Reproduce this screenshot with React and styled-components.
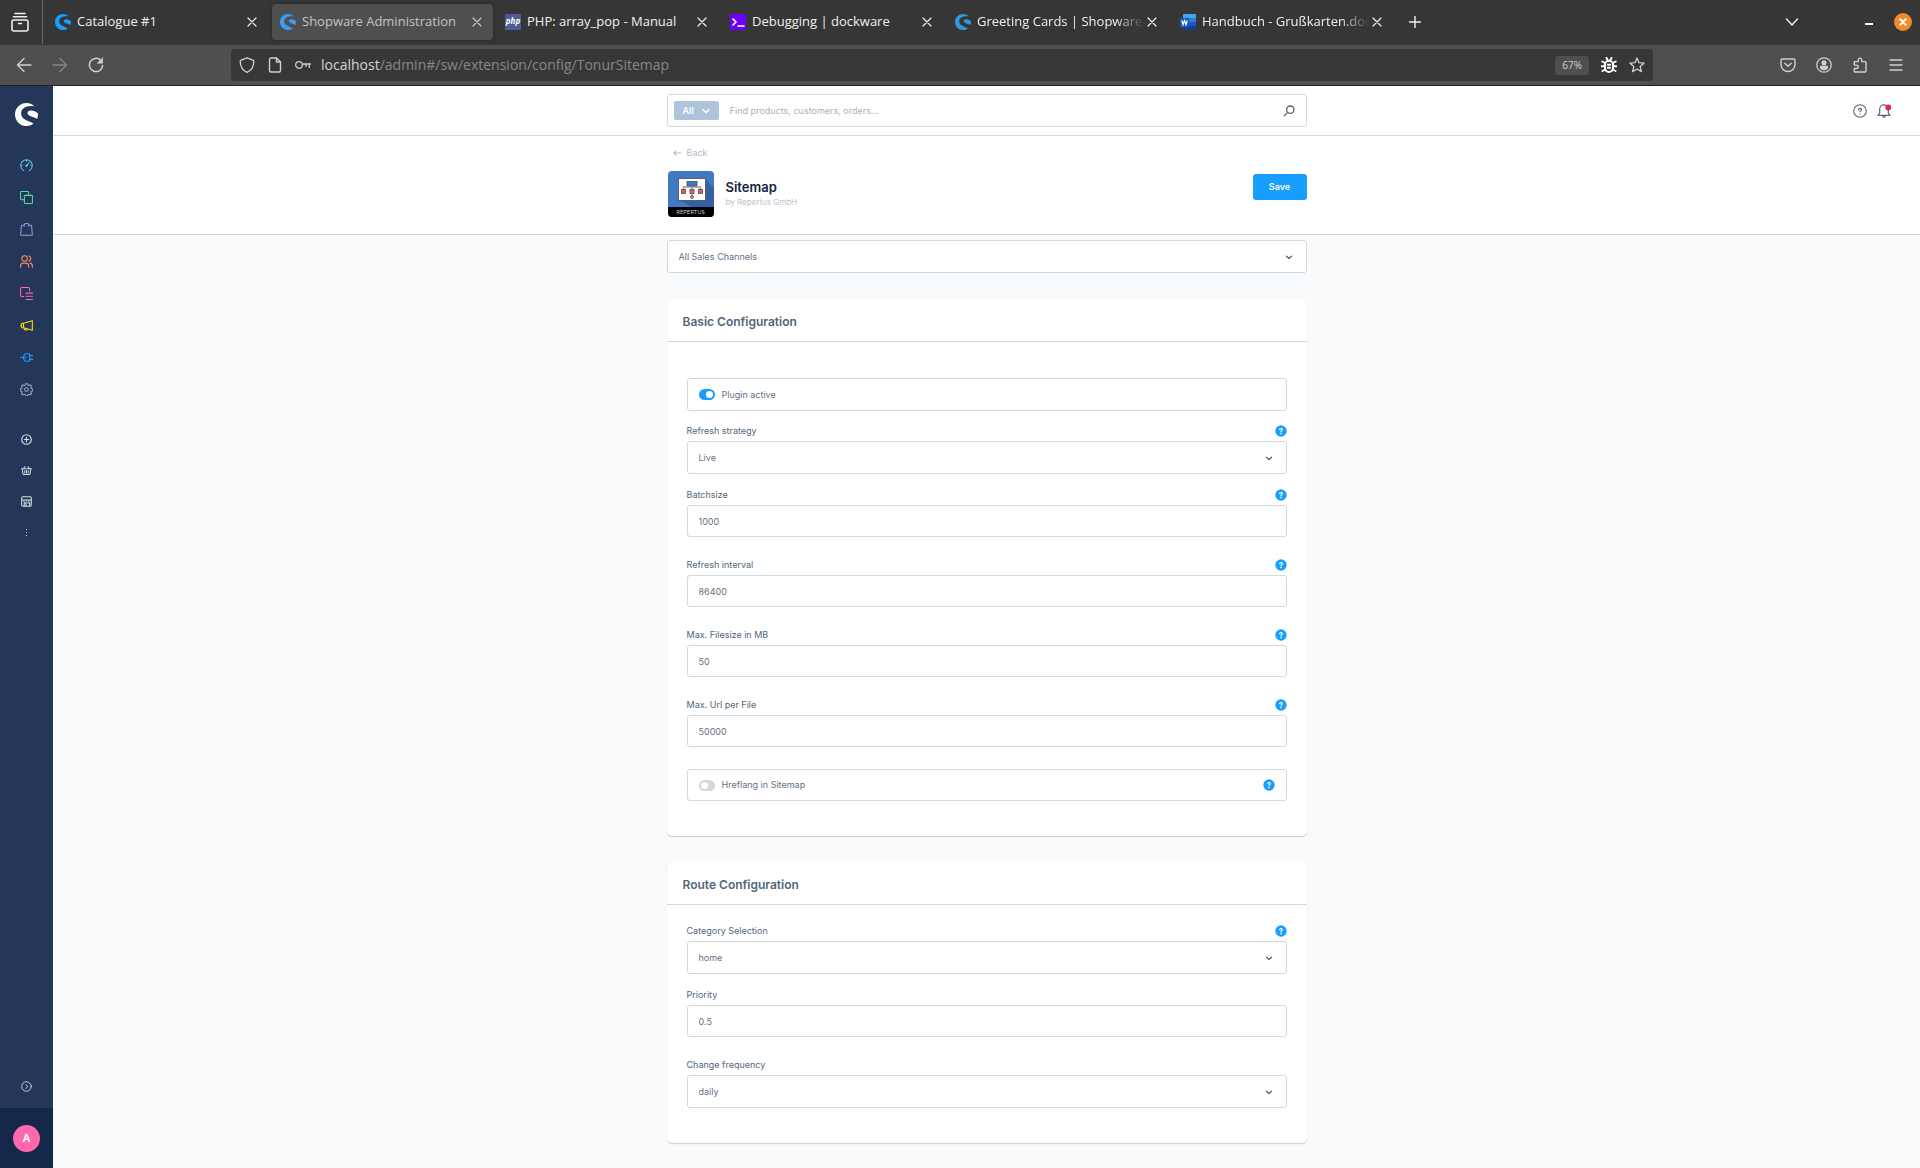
import React from "react";
import styled, { createGlobalStyle, css } from "styled-components";
import { SiShopware } from "react-icons/si";

const GlobalStyle = createGlobalStyle`
  *, *::before, *::after { box-sizing: border-box; }
  body { margin: 0; background: #f9fafb; }
  button, input, select { font: inherit; margin: 0; }
  button { border: 0; padding: 0; background: none; color: inherit; cursor: pointer; }
  a { color: inherit; text-decoration: none; }
  svg { display: block; flex: none; }
`;

/* ---------- icons ---------- */

const Line = ({ size = 16, box = 16, width = 1, children, ...rest }) => (
  <svg
    width={size}
    height={size}
    viewBox={`0 0 ${box} ${box}`}
    fill="none"
    stroke="currentColor"
    strokeWidth={width}
    strokeLinecap="round"
    strokeLinejoin="round"
    aria-hidden="true"
    {...rest}
  >
    {children}
  </svg>
);

const CloseIcon = () => (
  <Line size={10} box={10} width={1.2}><path d="M1 1l8 8M9 1L1 9" /></Line>
);
const ChevronIcon = ({ size = 8, width = 1.6 }) => (
  <Line size={size} box={8} width={width}><path d="M1.2 2.8L4 5.4l2.8-2.6" /></Line>
);
const SelectChevron = () => (
  <Line size={8} box={8} width={1.3}><path d="M1.5 3.200L4 5.500l2.500-2.300" /></Line>
);
const TabsChevron = () => (
  <Line width={1.400}><path d="M2.500 5L8 11l5.500-6" /></Line>
);
const ArchiveIcon = () => (
  <Line size={20} box={20} width={1.6}>
    <path d="M5 1.5h10M3.5 4.8h13" />
    <rect x="2" y="8" width="16" height="11" rx="2" />
    <path d="M8.5 11.5h3" />
  </Line>
);
const BackIcon = () => (
  <Line width={1.4}><path d="M15 8H1.5M8 1.5L1.5 8 8 14.5" /></Line>
);
const ForwardIcon = () => (
  <Line width={1.4}><path d="M1 8h13.5M8 1.5L14.5 8 8 14.5" /></Line>
);
const ReloadIcon = () => (
  <Line width={1.5}>
    <path d="M12.8 3.4A6.6 6.6 0 1 0 14.6 8.6" />
    <path d="M14.6 1v5.2H9.4z" fill="currentColor" strokeWidth="0.6" />
  </Line>
);
const ShieldIcon = () => (
  <Line width={1.3}>
    <path d="M8 .9l6 2.3c.6.2.8.6.8 1.1C14.7 10 12.500 13.500 8 15.300 3.500 13.500 1.300 10 1.200 4.300c0-.5.2-.9.8-1.100z" />
  </Line>
);
const PageIcon = () => (
  <Line width={1.4}>
    <path d="M9.500 1H4a1.500 1.500 0 0 0-1.500 1.500v11A1.500 1.500 0 0 0 4 15h8a1.500 1.500 0 0 0 1.500-1.500V5z" />
    <path d="M9.500 1v4h4" />
  </Line>
);
const KeyIcon = () => (
  <Line width={1.3}>
    <circle cx="4" cy="8" r="3.300" />
    <path d="M7.500 7H15.500M14.300 7v3.600M11 7v2.400" />
  </Line>
);
const BugIcon = () => (
  <Line width={2} color="#fff">
    <rect x="4" y="3.800" width="8" height="11.200" rx="4" />
    <path d="M5.500 1l1 2M10.500 1l-1 2M1.300 4.500L4 6M14.700 4.500L12 6M.8 9.300H4M15.200 9.300H12M1.500 14L4.200 12.500M14.500 14l-2.700-1.500M6.800 7.800h2.400M6.800 10.800h2.400" />
  </Line>
);
const StarIcon = () => (
  <Line width={1.3}>
    <path d="M8 1l2 4.700 5 .5-3.800 3.400 1.200 5L8 12l-4.400 2.600 1.200-5L1 6.200l5-.5z" />
  </Line>
);
const PocketIcon = () => (
  <Line width={1.4}>
    <path d="M2.300 2h11.400c.8 0 1.300.5 1.300 1.300V7.500a7 7 0 0 1-14 0V3.300C1 2.500 1.500 2 2.300 2z" />
    <path d="M4.800 6.300L8 9.300l3.200-3" />
  </Line>
);
const AccountIcon = () => (
  <Line width={1.3}>
    <circle cx="8" cy="8" r="7.200" />
    <circle cx="8" cy="5.800" r="1.900" fill="currentColor" />
    <path d="M4.500 9.500h7c0 2-1.500 3.200-3.500 3.200S4.500 11.500 4.500 9.500z" fill="currentColor" />
  </Line>
);
const PuzzleIcon = () => (
  <Line width={1.4}>
    <path d="M2.300 4.600h4V2.800a1.700 1.700 0 0 1 3.400 0v1.800h3.300c.6 0 1 .4 1 1V14c0 .7-.4 1-1 1H3.300c-.7 0-1-.4-1-1v-2.500H4.500a1.700 1.700 0 0 0 0-3.400H2.300z" />
  </Line>
);
const MenuIcon = () => (
  <Line width={1.300}><path d="M2 3h12M2 8h12M2 13h12" /></Line>
);
const PlusIcon = () => (
  <Line size={12} box={12} width={1.400}><path d="M6 .5v11M.5 6h11" /></Line>
);

const GaugeIcon = () => (
  <Line size={13} box={14} width={1.100}>
    <path d="M4 12.400A6.200 6.200 0 1 1 10 12.400M7 .8v1.500M.8 7h1.500M11.700 7h1.500M7.200 7.200L9.800 4.200" />
    <circle cx="7" cy="7.300" r=".7" />
  </Line>
);
const CopyIcon = () => (
  <Line size={13} box={14} width={1.100}>
    <rect x="4.700" y="4.700" width="8.700" height="8.700" rx=".8" />
    <path d="M4.500 9.300H1.500a.9.9 0 0 1-.9-.9V1.500c0-.5.400-.9.900-.9h6.900c.5 0 .9.400.9.900v3" />
  </Line>
);
const BagIcon = () => (
  <Line size={13} box={14} width={1.100}>
    <path d="M4.500 2.500H1.600L.7 12.400c0 .6.300.9.800.9h11c.5 0 .8-.3.800-.9l-.9-9.900H9.500M4.500 3.600V2.500a2.500 2.200 0 0 1 5 0v1.100" />
  </Line>
);
const UsersIcon = () => (
  <Line size={13} box={14} width={1.200}>
    <circle cx="5" cy="3.800" r="3" />
    <path d="M.7 13.300v-1.500c0-2 1.300-3 3-3h2.600c1.700 0 3 1 3 3v1.500M9.700 1a3 3 0 0 1 0 5.600M10.800 8.800c1.600.2 2.500 1.300 2.500 3v1.500" />
  </Line>
);
const ContentIcon = () => (
  <Line size={13} box={14} width={1.100}>
    <path d="M4 10.200H2A1.400 1.400 0 0 1 .6 8.800V2A1.400 1.400 0 0 1 2 .6h7A1.400 1.400 0 0 1 10.400 2v2M6.500 6.600h7M6.500 10h7M6.500 13.400h7" />
  </Line>
);
const MegaphoneIcon = () => (
  <Line size={13} box={14} width={1.200}>
    <path d="M3.800 4.600L13.300 1.800v10.400L3.800 9.400zM3.800 4.600H2L1.300 7 2 9.400h1.800M.5 7h.8M4.300 9.600c0 3 3.800 2.800 3.800 1" />
  </Line>
);
const PlugIcon = () => (
  <Line size={13} box={14} width={1.200}>
    <path d="M.5 7H4M4 5.500L5.500 3h4.800v8H5.500L4 8.500zM10.300 5h3.200M10.300 9h3.200M6 6.500v1" />
  </Line>
);
const GearIcon = () => (
  <Line size={13} box={14} width={1.100}>
    <circle cx="7" cy="7" r="2" />
    <path d="M5.900.7h2.200l.4 1.700 1 .4 1.500-.9 1.500 1.500-.9 1.500.4 1 1.600.4v2.200l-1.600.4-.4 1 .9 1.500-1.500 1.500-1.500-.9-1 .4-.4 1.600H5.900l-.4-1.600-1-.4-1.500.9-1.500-1.500.9-1.500-.4-1L.5 8.500V6.300L2 5.900l.4-1-.9-1.500L3 1.900l1.500.9 1-.4z" />
  </Line>
);
const AddIcon = () => (
  <Line size={11} box={12} width={1.300}>
    <circle cx="6" cy="6" r="5.200" /><path d="M6 3.600v4.800M3.600 6h4.800" />
  </Line>
);
const BasketIcon = () => (
  <Line size={11} box={12} width={1.100}>
    <path d="M.6 4.200h10.800M1.300 4.200l.8 5.200c.1.600.5 1 1.100 1h5.600c.6 0 1-.4 1.100-1l.8-5.200M2.800 4l1.700-2.300M9.200 4L7.500 1.700M4.200 6v2.800M6 6v2.800M7.800 6v2.800" />
  </Line>
);
const StoreIcon = () => (
  <Line size={11} box={12} width={1.200}>
    <rect x=".8" y=".8" width="10.400" height="10.400" rx="1.200" />
    <path d="M.8 4.300h10.400M3.300 4.300v1.500M6 4.300v1.500M8.700 4.300v1.500M3.500 11V7.500h2V11M7.500 7.500h1.800V11" />
  </Line>
);
const DotsIcon = () => (
  <svg width="11" height="12" viewBox="0 0 11 12" fill="currentColor" aria-hidden="true">
    <rect x="5" y="2" width="1" height="1" />
    <rect x="5" y="5" width="1" height="1" />
    <rect x="5" y="8" width="1" height="1" />
  </svg>
);
const ExpandIcon = () => (
  <Line size={11} box={12} width={1}>
    <circle cx="6" cy="6" r="5.200" /><path d="M5.200 3.800L7.400 6 5.200 8.200" />
  </Line>
);
const SearchIcon = () => (
  <Line size={12} box={12} width={1.300}>
    <circle cx="7.300" cy="4.700" r="3.700" /><path d="M4.400 7.600L1.300 10.700" />
  </Line>
);
const HelpIcon = () => (
  <Line size={14} box={14} width={1.100}>
    <circle cx="7" cy="7" r="6.300" />
    <path d="M5.600 5.700a1.400 1.300 0 1 1 1.900 1.200c-.4.200-.5.400-.5.900M7 9.800v.1" />
  </Line>
);
const BellIcon = () => (
  <Line size={14} box={14} width={1.200}>
    <path d="M1 11.300h12L11.300 9V5.200a4.300 4.300 0 0 0-8.600 0V9zM5.500 11.500a1.500 1.600 0 0 0 3 0" />
    <circle cx="11.300" cy="3.500" r="3" fill="#e0284f" stroke="none" />
  </Line>
);
const ArrowLeftIcon = () => (
  <Line size={8} box={8} width={1.100}><path d="M7.600 4H.8M3 1.800L.8 4 3 6.200" /></Line>
);
const TipIcon = () => (
  <svg width="12" height="12" viewBox="0 0 12 12" fill="none" aria-hidden="true">
    <circle cx="6" cy="6" r="5.700" fill="#189eff" />
    <path d="M4.700 4.700a1.300 1.200 0 1 1 1.800 1.100c-.4.200-.5.400-.5.900" stroke="#fff" strokeWidth="1.200" strokeLinecap="round" />
    <circle cx="6" cy="8.600" r=".8" fill="#fff" />
  </svg>
);

const TerminalFavicon = () => (
  <svg width="16" height="16" viewBox="0 0 16 16" aria-hidden="true">
    <rect width="16" height="16" fill="#6b00ff" />
    <path d="M2.500 4.500L6 8l-3.500 3.500M7.500 12h7" fill="none" stroke="#fff" strokeWidth="1.600" />
  </svg>
);
const WordFavicon = () => (
  <svg width="16" height="16" viewBox="0 0 16 16" aria-hidden="true">
    <rect x="3" width="13" height="4" fill="#41a5ee" />
    <rect x="3" y="4" width="13" height="4" fill="#2b7cd3" />
    <rect x="3" y="8" width="13" height="4" fill="#185abd" />
    <rect x="3" y="12" width="13" height="4" fill="#103f91" />
    <rect y="4" width="9" height="9" rx="1" fill="#185abd" />
    <path d="M1.800 6.300l1.200 4.400 1.500-4.200L6 10.700l1.200-4.400" fill="none" stroke="#fff" strokeWidth="1.200" />
  </svg>
);
const SitemapLogo = () => (
  <svg width="46" height="36" viewBox="0 0 46 36" aria-hidden="true">
    <path d="M37 8l9 9v19H24L11 29z" fill="#3460a8" />
    <rect x="10.500" y="7.500" width="27" height="22" fill="#fff" stroke="#5b6068" />
    <path d="M24 15v9M15.500 19v-3h17v3M24 22v4" fill="none" stroke="#9a9da0" strokeWidth="1.500" />
    <g stroke="#4b4f55" strokeWidth=".8">
      <rect x="19" y="10.500" width="10" height="4.500" fill="#3d7bc9" />
      <rect x="13.500" y="18.500" width="4" height="4" fill="#f25c5c" />
      <rect x="22" y="18.500" width="4" height="4" fill="#f25c5c" />
      <rect x="30.500" y="18.500" width="4" height="4" fill="#f25c5c" />
      <circle cx="24" cy="26" r="1.500" fill="#d6a741" />
    </g>
  </svg>
);

/* ---------- browser chrome ---------- */

const Window = styled.div`
  display: flex;
  flex-direction: column;
  min-height: 100vh;
  font-family: Inter, "Liberation Sans", sans-serif;
  color: #52667a;
`;
const Chrome = styled.header`
  font-family: "Open Sans", "Noto Sans", sans-serif;
  font-size: 13px;
  color: #f0f0f0;
  background: #4f4f4f;
  border-bottom: 1px solid #231f23;
`;
const TabStrip = styled.div`
  display: flex;
  align-items: center;
  height: 45px;
  padding: 0 8px 1px 0;
  background: #363636;
`;
const ArchiveButton = styled.button`
  display: grid;
  place-items: center;
  width: 43px;
  height: 44px;
  padding-right: 3px;
  border-right: 1px solid #6a6a6a;
`;
const Tabs = styled.nav`
  display: flex;
  gap: 4px;
  padding-left: 4px;
`;
const Tab = styled.div`
  display: flex;
  align-items: center;
  gap: 6px;
  width: 221px;
  height: 36px;
  padding: 0 11px 0 8px;
  border-radius: 4px;
  ${({ $active }) => $active && css`
    background: #4f4f4f;
    color: #c4c4c4;
    box-shadow: 0 0 3px #222;
  `}
`;
const TabTitle = styled.a`
  flex: 1;
  min-width: 0;
  margin-right: -4px;
  padding-bottom: 2px;
  overflow: hidden;
  white-space: nowrap;
  line-height: 20px;
  ${({ $fade }) => $fade && css`
    mask-image: linear-gradient(to right, #000 calc(100% - 30px), transparent);
  `}
`;
const Favicon = styled.span`
  display: grid;
  place-items: center;
  width: 16px;
  height: 16px;
  color: ${({ $color }) => $color || "#189eff"};
`;
const PhpBadge = styled.span`
  width: 16px;
  height: 16px;
  border-radius: 1px;
  background: #4f5b93;
  color: #fff;
  font: italic 700 8px/14px "Open Sans", sans-serif;
  text-align: center;
`;
const TabClose = styled.button`
  display: grid;
  place-items: center;
  height: 16px;
`;
const ChromeButton = styled.button`
  display: grid;
  place-items: center;
  width: ${({ $width }) => $width || 36}px;
  height: 32px;
  opacity: ${({ $dim }) => ($dim ? 0.4 : 1)};
`;
const Spacer = styled.div`
  flex: 1;
`;
const Minimise = styled.span`
  width: 8px;
  height: 2px;
  margin-top: 4px;
  background: #fff;
`;
const CloseWindow = styled.button`
  display: grid;
  place-items: center;
  width: 18px;
  height: 18px;
  border-radius: 50%;
  background: #f28a2a;
  color: #fff;
`;
const NavBar = styled.div`
  display: flex;
  align-items: center;
  height: 40px;
  padding: 0 6px;
  color: #d0d0d0;
`;
const NavGroup = styled.div`
  display: flex;
  align-items: center;
  width: ${({ $wide }) => ($wide ? 261 : 225)}px;
  justify-content: ${({ $wide }) => ($wide ? "flex-end" : "flex-start")};
`;
const UrlBar = styled.div`
  display: flex;
  flex: 1;
  align-items: center;
  height: 32px;
  padding: 0 2px;
  border-radius: 4px;
  background: #373737;
`;
const Url = styled.div`
  flex: 1;
  padding-left: 4px;
  font-size: 14px;
  line-height: 20px;
  color: #d4d4d4;
  span { color: #878787; }
`;
const Zoom = styled.button`
  height: 19px;
  margin-right: 6px;
  padding: 0 7px;
  border-radius: 3px;
  background: #4f4f4f;
  font-size: 10px;
  line-height: 19px;
`;

/* ---------- administration ---------- */

const Admin = styled.div`
  display: flex;
  flex: 1;
  font-size: 9px;
  line-height: 16px;
`;
const Sidebar = styled.aside`
  display: flex;
  flex-direction: column;
  width: 53px;
  background: #243758;
`;
const Brand = styled.a`
  display: grid;
  place-items: center;
  height: 56px;
  color: #fff;
`;
const MenuList = styled.nav`
  display: flex;
  flex-direction: column;
  padding: ${({ $top }) => $top || 0}px 0 ${({ $bottom }) => $bottom || 0}px;
`;
const MenuLink = styled.a`
  display: grid;
  place-items: center;
  height: ${({ $short }) => ($short ? 31 : 32)}px;
  color: ${({ $color }) => $color || "#d1dae4"};
`;
const UserBar = styled.div`
  display: grid;
  place-items: center;
  height: 60px;
  background: #14284b;
`;
const Avatar = styled.button`
  width: 27px;
  height: 27px;
  border-radius: 50%;
  background: #ff68ac;
  color: #fff;
  font-size: 11px;
  font-weight: 600;
`;
const Main = styled.main`
  flex: 1;
  min-width: 0;
`;
const TopBar = styled.div`
  display: grid;
  grid-template-columns: 1fr minmax(0, 640px) 1fr;
  align-items: center;
  height: 50px;
  border-bottom: 1px solid #d1d9e0;
  background: #fff;
`;
const SearchBox = styled.div`
  display: flex;
  grid-column: 2;
  align-items: center;
  height: 33px;
  padding: 0 11px 0 6px;
  border: 1px solid #d1d9e0;
  border-radius: 3px;
  background: #fff;
`;
const SearchType = styled.button`
  display: flex;
  align-items: center;
  gap: 8px;
  height: 19px;
  padding: 0 9px;
  border-radius: 2px;
  background: #aec4dc;
  color: #fff;
  font-weight: 600;
`;
const SearchInput = styled.input`
  flex: 1;
  min-width: 0;
  padding: 0 11px;
  border: 0;
  outline: 0;
  background: none;
  color: #52667a;
  &::placeholder { color: #a5b3bf; opacity: 1; }
`;
const TopActions = styled.div`
  display: flex;
  justify-content: flex-end;
  gap: 10px;
  padding-right: 29px;
`;
const PageHead = styled.div`
  height: 99px;
  padding-top: 9px;
  border-bottom: 1px solid #d1d9e0;
  background: #fff;
`;
const Column = styled.div`
  max-width: 640px;
  margin: 0 auto;
`;
const BackLink = styled.a`
  display: flex;
  align-items: center;
  gap: 6px;
  padding-left: 6px;
  color: #b0bcc8;
`;
const PluginRow = styled.div`
  display: flex;
  align-items: center;
  gap: 12px;
  padding: 10px 0 0 1px;
`;
const PluginLogo = styled.div`
  width: 46px;
  height: 46px;
  overflow: hidden;
  border-radius: 4px;
  background: #4078c4;
`;
const LogoName = styled.div`
  background: #000;
  color: #ddd;
  font: 6px/10px "Open Sans", sans-serif;
  text-align: center;
`;
const PluginText = styled.div`
  flex: 1;
`;
const PluginTitle = styled.h1`
  margin: 0;
  color: #12253e;
  font-size: 13px;
  font-weight: 600;
  line-height: 16px;
`;
const Vendor = styled.div`
  font-size: 8px;
  line-height: 14px;
  color: #b9c5d1;
`;
const SaveButton = styled.button`
  width: 54px;
  height: 26px;
  margin-bottom: 14px;
  border-radius: 3px;
  background: #189eff;
  color: #fff;
  font-weight: 600;
`;
const Content = styled.div`
  padding: 5px 0 24px;
`;
const Card = styled.section`
  margin-top: 27px;
  padding-bottom: 35px;
  border-radius: 5px;
  background: #fff;
  box-shadow: 0 1px 1px rgba(0, 0, 0, 0.14), 0 1px 2px rgba(0, 0, 0, 0.06);
`;
const CardTitle = styled.h2`
  margin: 0;
  padding: 14px 16px 11px;
  border-bottom: 1px solid #d1d9e0;
  font-size: 12px;
  font-weight: 600;
  line-height: 16px;
  color: #52667a;
`;
const Fields = styled.form`
  padding: 16px 20px 0;
`;
const Field = styled.div`
  margin-bottom: ${({ $gap }) => $gap}px;
  &:last-child { margin-bottom: 0; }
`;
const LabelRow = styled.div`
  display: flex;
  align-items: center;
  justify-content: space-between;
  height: 20px;
`;
const boxed = css`
  width: 100%;
  padding: 0 11px;
  border: 1px solid #d1d9e0;
  border-radius: 3px;
  outline: 0;
  background: #fff;
  color: #5f7285;
`;
const Input = styled.input`
  ${boxed}
  display: block;
  height: 32px;
`;
const SelectWrap = styled.div`
  position: relative;
  svg {
    position: absolute;
    top: 13px;
    right: 14px;
    pointer-events: none;
  }
`;
const Select = styled.select`
  ${boxed}
  display: block;
  height: 33px;
  appearance: none;
`;
const ToggleBox = styled.div`
  ${boxed}
  display: flex;
  align-items: center;
  gap: 7px;
  height: 33px;
  margin: ${({ $above }) => $above}px 0 10px;
  &:last-child { margin-bottom: 0; height: 32px; }
  label { flex: 1; }
`;
const Switch = styled.input`
  appearance: none;
  width: 16px;
  height: 11px;
  padding: 2px;
  border-radius: 6px;
  background: #d1d9e0;
  &::before {
    content: "";
    display: block;
    width: 7px;
    height: 7px;
    border-radius: 50%;
    background: #fff;
  }
  &:checked { background: #189eff; }
  &:checked::before { margin-left: 5px; }
`;
const Tip = styled.button`
  display: block;
  width: 12px;
  height: 12px;
`;

/* ---------- data ---------- */

const Swirl = () => <SiShopware size={16} />;

const tabs = [
  { title: "Catalogue #1", icon: <Swirl /> },
  { title: "Shopware Administration", icon: <Swirl />, color: "#3c9bf5", active: true },
  { title: "PHP: array_pop - Manual", icon: <PhpBadge>php</PhpBadge> },
  { title: "Debugging | dockware", icon: <TerminalFavicon /> },
  { title: "Greeting Cards | Shopware S", icon: <Swirl />, color: "#2f97dd", fade: true },
  { title: "Handbuch - Grußkarten.doc", icon: <WordFavicon />, fade: true },
];

const menu = [
  ["Dashboard", GaugeIcon, "#5bc8e0"],
  ["Catalogues", CopyIcon, "#57d9a3"],
  ["Orders", BagIcon, "#a092f0"],
  ["Customers", UsersIcon, "#f88962"],
  ["Content", ContentIcon, "#ff68b4"],
  ["Marketing", MegaphoneIcon, "#ffd700"],
  ["Extensions", PlugIcon, "#189eff"],
  ["Settings", GearIcon, "#9aa8b5"],
];

const channels = [
  ["Add sales channel", AddIcon],
  ["Storefront", BasketIcon],
  ["Headless", StoreIcon],
  ["More", DotsIcon],
];

const basic = [
  { id: "strategy", label: "Refresh strategy", value: "Live", select: true, tip: true },
  { id: "batch", label: "Batchsize", value: "1000", tip: true },
  { id: "interval", label: "Refresh interval", value: "86400", tip: true },
  { id: "filesize", label: "Max. Filesize in MB", value: "50", tip: true },
  { id: "urls", label: "Max. Url per File", value: "50000", tip: true },
];

const route = [
  { id: "category", label: "Category Selection", value: "home", select: true, tip: true },
  { id: "priority", label: "Priority", value: "0.5" },
  { id: "frequency", label: "Change frequency", value: "daily", select: true },
];

const HelpTip = ({ name }) => (
  <Tip type="button" aria-label={`Help: ${name}`}><TipIcon /></Tip>
);

const Dropdown = ({ value, ...rest }) => (
  <SelectWrap>
    <Select defaultValue={value} {...rest}><option>{value}</option></Select>
    <SelectChevron />
  </SelectWrap>
);

const ConfigField = ({ id, label, value, select, tip }) => (
  <Field $gap={select ? 11 : 18}>
    <LabelRow>
      <label htmlFor={id}>{label}</label>
      {tip && <HelpTip name={label} />}
    </LabelRow>
    {select ? <Dropdown id={id} value={value} /> : <Input id={id} defaultValue={value} />}
  </Field>
);

const ToggleField = ({ id, label, on, tip, above }) => (
  <ToggleBox $above={above}>
    <Switch id={id} type="checkbox" defaultChecked={on} />
    <label htmlFor={id}>{label}</label>
    {tip && <HelpTip name={label} />}
  </ToggleBox>
);

export default function App() {
  return (
    <Window>
      <GlobalStyle />
      <Chrome>
        <TabStrip>
          <ArchiveButton aria-label="Recent browsing"><ArchiveIcon /></ArchiveButton>
          <Tabs>
            {tabs.map((t) => (
              <Tab key={t.title} $active={t.active}>
                <Favicon $color={t.color}>{t.icon}</Favicon>
                <TabTitle href="#" $fade={t.fade}>{t.title}</TabTitle>
                <TabClose aria-label="Close tab"><CloseIcon /></TabClose>
              </Tab>
            ))}
          </Tabs>
          <ChromeButton $width={44} aria-label="New tab"><PlusIcon /></ChromeButton>
          <Spacer />
          <ChromeButton $width={104} aria-label="List all tabs"><TabsChevron /></ChromeButton>
          <ChromeButton $width={50} aria-label="Minimise"><Minimise /></ChromeButton>
          <CloseWindow aria-label="Close window">
            <Line size={8} box={8} width={2}><path d="M1.300 1.300l5.400 5.400M6.700 1.300L1.300 6.700" /></Line>
          </CloseWindow>
        </TabStrip>
        <NavBar>
          <NavGroup>
            <ChromeButton aria-label="Back"><BackIcon /></ChromeButton>
            <ChromeButton aria-label="Forward" $dim><ForwardIcon /></ChromeButton>
            <ChromeButton aria-label="Reload"><ReloadIcon /></ChromeButton>
          </NavGroup>
          <UrlBar>
            <ChromeButton $width={28} aria-label="Tracking protection"><ShieldIcon /></ChromeButton>
            <ChromeButton $width={28} aria-label="Site information"><PageIcon /></ChromeButton>
            <ChromeButton $width={28} aria-label="Passwords"><KeyIcon /></ChromeButton>
            <Url>localhost<span>/admin#/sw/extension/config/TonurSitemap</span></Url>
            <Zoom>67%</Zoom>
            <ChromeButton $width={28} aria-label="Debug"><BugIcon /></ChromeButton>
            <ChromeButton $width={28} aria-label="Bookmark"><StarIcon /></ChromeButton>
          </UrlBar>
          <NavGroup $wide>
            <ChromeButton aria-label="Pocket"><PocketIcon /></ChromeButton>
            <ChromeButton aria-label="Account"><AccountIcon /></ChromeButton>
            <ChromeButton aria-label="Add-ons"><PuzzleIcon /></ChromeButton>
            <ChromeButton aria-label="Menu"><MenuIcon /></ChromeButton>
          </NavGroup>
        </NavBar>
      </Chrome>

      <Admin>
        <Sidebar>
          <Brand href="#" aria-label="Shopware"><SiShopware size={23} /></Brand>
          <MenuList $top={7}>
            {menu.map(([name, Icon, color]) => (
              <MenuLink key={name} href="#" aria-label={name} $color={color}><Icon /></MenuLink>
            ))}
          </MenuList>
          <MenuList $top={19}>
            {channels.map(([name, Icon]) => (
              <MenuLink key={name} href="#" aria-label={name} $short><Icon /></MenuLink>
            ))}
          </MenuList>
          <Spacer />
          <MenuList $bottom={6}>
            <MenuLink href="#" aria-label="Expand menu"><ExpandIcon /></MenuLink>
          </MenuList>
          <UserBar><Avatar>A</Avatar></UserBar>
        </Sidebar>

        <Main>
          <TopBar>
            <SearchBox>
              <SearchType>All <ChevronIcon /></SearchType>
              <SearchInput type="search" aria-label="Search" placeholder="Find products, customers, orders..." />
              <SearchIcon />
            </SearchBox>
            <TopActions>
              <button aria-label="Help"><HelpIcon /></button>
              <button aria-label="Notifications"><BellIcon /></button>
            </TopActions>
          </TopBar>
          <PageHead>
            <Column>
              <BackLink href="#"><ArrowLeftIcon />Back</BackLink>
              <PluginRow>
                <PluginLogo><SitemapLogo /><LogoName>REPERTUS</LogoName></PluginLogo>
                <PluginText>
                  <PluginTitle>Sitemap</PluginTitle>
                  <Vendor>by Repertus GmbH</Vendor>
                </PluginText>
                <SaveButton>Save</SaveButton>
              </PluginRow>
            </Column>
          </PageHead>
          <Content>
            <Column>
              <Dropdown value="All Sales Channels" aria-label="Sales channel" />
              <Card>
                <CardTitle>Basic Configuration</CardTitle>
                <Fields>
                  <ToggleField id="active" label="Plugin active" on above={20} />
                  {basic.map((f) => <ConfigField key={f.id} {...f} />)}
                  <ToggleField id="hreflang" label="Hreflang in Sitemap" tip above={22} />
                </Fields>
              </Card>
              <Card>
                <CardTitle>Route Configuration</CardTitle>
                <Fields>
                  {route.map((f) => <ConfigField key={f.id} {...f} />)}
                </Fields>
              </Card>
            </Column>
          </Content>
        </Main>
      </Admin>
    </Window>
  );
}
